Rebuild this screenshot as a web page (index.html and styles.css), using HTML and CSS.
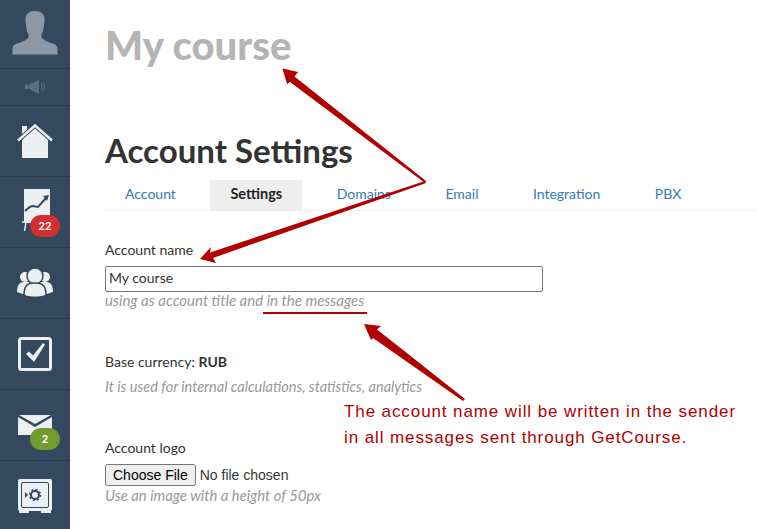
FILE: index.html
```html
<!DOCTYPE html>
<html lang="en">
<head>
    <meta charset="UTF-8">
    <title>Account Settings</title>
    <link rel="stylesheet" href="styles.css">
</head>
<body>
    <div class="layout">
        <!-- Sidebar -->
        <nav class="sidebar">
            <div class="side-item side-user">
                <svg width="46" height="45" viewBox="0 0 46 45"><path class="user" d="M23 1c-6 0-9.500 3-9.500 8 0 3 .5 6 .8 8 .2 3 1 5 2.200 7 .5 2 0 4-1.500 5-4 3-8 4-11 5-2 .7-3.500 2-3.500 5v5.500h45V39c0-3-1.500-4.300-3.500-5-3-1-7-2-11-5-1.500-1-2-3-1.500-5 1.200-2 2-4 2.200-7 .3-2 .8-5 .8-8 0-5-3.500-8-9.500-8z"/></svg>
            </div>
            <div class="side-item side-sound">
                <svg width="22" height="16" viewBox="0 0 22 16"><path class="sound" d="M1 5.500h3.500v4.500H1zM5 5.500L15 1v14L5 10z"/><path class="sound-wave" d="M17 4.500c1.200 2 1.200 5 0 7M19 3c1.800 3 1.800 7 0 10"/></svg>
            </div>
            <div class="side-item">
                <svg width="36" height="34" viewBox="0 0 36 34"><path class="glyph" d="M5 2h5v3.500l-5 4.500zM5 16L18 4.500 31 16v18H5z"/><path class="roof" d="M1 16.500L18 1.500l17 15"/></svg>
            </div>
            <div class="side-item">
                <svg class="chart" width="30" height="44" viewBox="0 0 30 44"><path class="glyph" d="M4 0h26v34H4z"/><path class="dark-line" d="M5 22c3-3 5-5 8-5l5 1 9-10"/><path class="dark-arrow" d="M29 6l-6 1 4 5z"/><path class="thin-line" d="M2 33h11M6 33l-1.500 9"/></svg>
                <span class="badge badge-red">22</span>
            </div>
            <div class="side-item">
                <svg width="36" height="30" viewBox="0 0 36 30"><circle class="glyph" cx="8" cy="9" r="5"/><circle class="glyph" cx="28" cy="9" r="5"/><path class="glyph" d="M0 24c0-6 2-10 7-10h22c5 0 7 4 7 10l-6 2H6z"/><circle class="glyph ring" cx="18" cy="8" r="8"/><path class="glyph ring" d="M7 27c0-9 3-12 11-12s11 3 11 12c-4 3-18 3-22 0z"/></svg>
            </div>
            <div class="side-item">
                <svg width="34" height="34" viewBox="0 0 34 34"><rect class="box" x="1.500" y="1.500" width="31" height="31" rx="2"/><path class="glyph" d="M8 17l3-2.500 4 4L25 6l2 1.500-11 17.500z"/></svg>
            </div>
            <div class="side-item">
                <svg width="34" height="20" viewBox="0 0 34 20"><path class="glyph" d="M0 2l17 10L34 2v18H0z"/><path class="glyph" d="M1 0h32L17 9z"/></svg>
                <span class="badge badge-green">2</span>
            </div>
            <div class="side-item">
                <svg width="34" height="34" viewBox="0 0 34 34"><rect class="glyph" width="34" height="32" rx="2"/><path class="glyph" d="M1 32h10v2H1zM23 32h10v2H23z"/><rect class="safe-door" x="3.500" y="3.500" width="27" height="25" rx="1.500"/><circle class="safe-ring" cx="17" cy="16" r="4"/><circle class="safe-wheel" cx="17" cy="16" r="5.500"/><path class="dark-arrow" d="M7 13l3 3-3 3z"/></svg>
            </div>
        </nav>

        <!-- Content -->
        <main class="content">
            <div class="course-title">My course</div>
            <h1>Account Settings</h1>
            <ul class="tabs">
                <li class="tab">Account</li>
                <li class="tab active">Settings</li>
                <li class="tab">Domains</li>
                <li class="tab">Email</li>
                <li class="tab">Integration</li>
                <li class="tab">PBX</li>
            </ul>

            <div class="field field-name">
                <label class="field-label" for="account-name">Account name</label>
                <input class="text-input" id="account-name" type="text" value="My course">
                <div class="hint">using as account title and in the messages</div>
            </div>

            <div class="field field-currency">
                <div class="field-label">Base currency: <b>RUB</b></div>
                <div class="hint">It is used for internal calculations, statistics, analytics</div>
            </div>

            <div class="field field-logo">
                <label class="field-label" for="logo">Account logo</label>
                <input class="file-input" id="logo" type="file">
                <div class="hint">Use an image with a height of 50px</div>
            </div>
        </main>
    </div>

    <!-- Annotation on top of the screenshot -->
    <svg class="arrows" width="757" height="529" viewBox="0 0 757 529">
        <path class="arrow" d="M282.500 68.500L298 72l-3.500 4.500L426 181l-1 2L290 82l-3 2z"/>
        <path class="arrow" d="M200 259l11-12 -1 5.500L425 181l1 2-213 75 3 5z"/>
        <path class="arrow" d="M364 324l17 2-4 3.500L465 399l-2 2-90-63-2 2z"/>
        <rect class="arrow" x="263" y="312" width="104" height="2"/>
    </svg>
    <div class="note">The account name will be written in the sender<br>in all messages sent through GetCourse.</div>
</body>
</html>
```

FILE: styles.css
```css
body {
    margin: 0;
    font-family: Lato, "Open Sans", sans-serif;
    color: #333;
    background: #fff;
    overflow: hidden;
}

.layout {
    display: flex;
    height: 529px;
    overflow: hidden;
}

.sidebar {
    width: 70px;
    flex: none;
    background-color: #34495e;
}

.side-item {
    position: relative;
    height: 70px;
    display: flex;
    align-items: center;
    justify-content: center;
    border-bottom: 1px solid #2b3c50;
}

.side-user {
    height: 68px;
}

.side-user svg {
    margin-bottom: 4px;
}

.side-sound {
    height: 36px;
}

.chart {
    margin-bottom: 2px;
}

.user {
    fill: #8e98a5;
}

.sound {
    fill: #5b7188;
}

.sound-wave {
    fill: none;
    stroke: #5b7188;
    stroke-width: 1;
}

.glyph {
    fill: #ecf0f1;
}

.ring {
    stroke: #34495e;
    stroke-width: 1.500;
}

.roof {
    fill: none;
    stroke: #ecf0f1;
    stroke-width: 2.500;
}

.thin-line {
    fill: none;
    stroke: #ecf0f1;
    stroke-width: 1.500;
}

.dark-line {
    fill: none;
    stroke: #34495e;
    stroke-width: 2;
}

.dark-arrow {
    fill: #34495e;
}

.box {
    fill: none;
    stroke: #ecf0f1;
    stroke-width: 3;
}

.safe-door {
    fill: none;
    stroke: #34495e;
    stroke-width: 1;
}

.safe-ring {
    fill: none;
    stroke: #34495e;
    stroke-width: 2;
}

.safe-wheel {
    fill: none;
    stroke: #34495e;
    stroke-width: 1.500;
    stroke-dasharray: 2 2.300;
}

.badge {
    position: absolute;
    left: 30px;
    bottom: 10px;
    width: 30px;
    height: 22px;
    border-radius: 11px;
    color: #fff;
    font-size: 11px;
    font-weight: 700;
    line-height: 22px;
    text-align: center;
}

.badge-red {
    background-color: #d32f2f;
}

.badge-green {
    background-color: #739c2e;
}

.content {
    flex: 1;
    padding-left: 35px;
}

.course-title {
    margin-top: 23px;
    font-size: 40px;
    font-weight: 900;
    line-height: 44px;
    color: #b5b5b5;
}

h1 {
    margin: 61px 0 0;
    font-size: 33px;
    font-weight: 700;
    line-height: 44px;
    color: #333;
}

.tabs {
    display: flex;
    gap: 14.500px;
    list-style: none;
    margin: 8px 0 0;
    padding: 0;
    height: 30px;
    border-bottom: 1px solid #eee;
}

.tab {
    padding: 0 20px;
    font-size: 14px;
    line-height: 28px;
    color: #337ab7;
}

.tab.active {
    background-color: #eee;
    color: #222;
    font-weight: 700;
    font-size: 14.500px;
}

.field-label {
    display: block;
    font-size: 14px;
    line-height: 20px;
    color: #333;
}

.field-name {
    margin-top: 29px;
}

.text-input {
    display: block;
    box-sizing: border-box;
    width: 438px;
    height: 26px;
    margin-top: 6px;
    padding: 0 3px 3px;
    border: 1px solid #767676;
    border-radius: 2px;
    font-family: Lato, sans-serif;
    font-size: 14px;
    color: #333;
}

.hint {
    font-size: 14.800px;
    font-style: italic;
    line-height: 20px;
    color: #999;
}

.field-name .hint {
    margin-top: -2px;
    font-size: 15px;
}

.field-currency {
    margin-top: 42px;
}

.field-currency .hint {
    margin-top: 5px;
    font-size: 14.500px;
}

.field-logo {
    margin-top: 41px;
}

.field-logo .hint {
    margin-top: -1px;
}

.file-input {
    display: block;
    margin-top: 6px;
    font-family: "Liberation Sans", sans-serif;
    font-size: 14px;
}

.arrows {
    position: absolute;
    left: 0;
    top: 0;
}

.arrow {
    fill: #b00000;
}

.note {
    position: absolute;
    left: 344px;
    top: 399px;
    font-family: "Liberation Sans", sans-serif;
    font-size: 17px;
    line-height: 26px;
    letter-spacing: 0.9px;
    color: #b00000;
}
```
